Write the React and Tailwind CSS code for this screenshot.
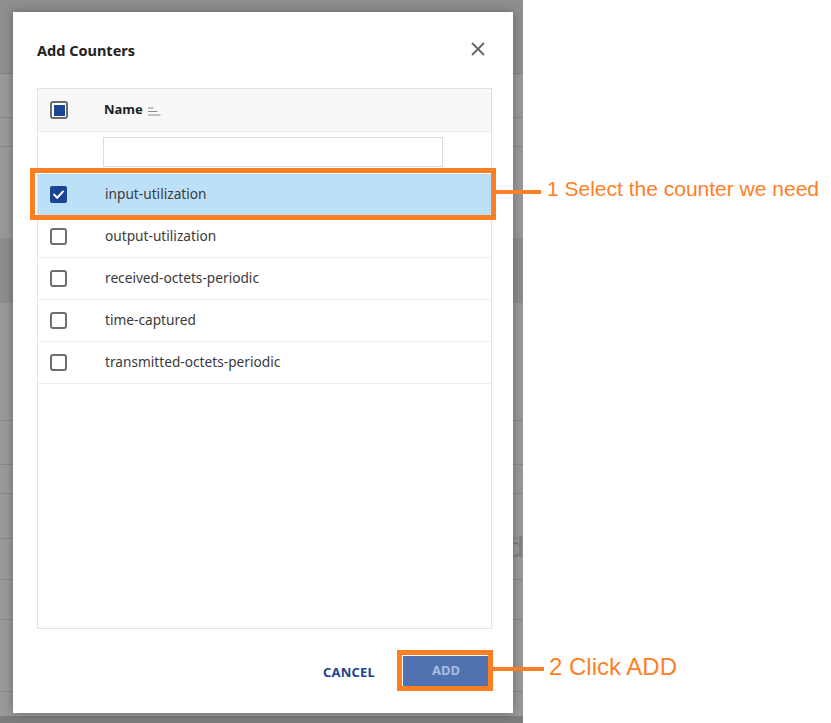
import React from "react";

function Box({ checked }) {
  if (checked) {
    return (
      <div className="w-[17px] h-[17px] rounded-[2px] bg-[#1a4494] flex items-center justify-center">
        <svg width="13" height="13" viewBox="0 0 13 13" fill="none">
          <path d="M2.2 6.8 L5.2 9.7 L10.9 3.6" stroke="#fff" strokeWidth="2" strokeLinecap="square" />
        </svg>
      </div>
    );
  }
  return <div className="w-[17px] h-[17px] rounded-[3px] border-2 border-[#6e6e6e] bg-white" />;
}

export default function App() {
  const rows = [
    "input-utilization",
    "output-utilization",
    "received-octets-periodic",
    "time-captured",
    "transmitted-octets-periodic",
  ];
  return (
    <div className="relative w-[831px] h-[723px] bg-white overflow-hidden font-['Noto_Sans',sans-serif]">
      {/* dimmed page behind */}
      <div className="relative w-[523px] h-[723px] bg-[#999999] flex flex-col overflow-hidden">
        <div className="h-[74px] shrink-0 bg-[#8f8f8f] border-b border-[#828282]" />
        <div className="h-[44px] shrink-0 border-b border-[#888888]" />
        <div className="h-[29px] shrink-0 border-b border-[#888888]" />
        <div className="h-[91px] shrink-0" />
        <div className="h-[65px] shrink-0 bg-[#8d8d8d]" />
        <div className="h-[118px] shrink-0 border-b border-[#888888]" />
        <div className="h-[44px] shrink-0 border-b border-[#888888]" />
        <div className="h-[29px] shrink-0 border-b border-[#888888]" />
        <div className="h-[45px] shrink-0 border-b border-[#888888]" />
        <div className="h-[41px] shrink-0 border-b border-[#888888]" />
        <div className="h-[40px] shrink-0 border-b border-[#888888]" />
        <div className="h-[72px] shrink-0 border-b border-[#888888]" />
        <div className="flex-1" />
        <div className="h-[7px] shrink-0 bg-[#7c7c7c]" />
        <span className="absolute left-[507px] top-[528px] text-[28px] leading-[36px] text-[#7f7f7f]">d</span>
      </div>

      {/* dialog */}
      <div className="absolute left-[13px] top-[12px] w-[500px] h-[701px] bg-white shadow-[0_0_10px_rgba(0,0,0,0.3)] flex flex-col">
        <div className="h-[76px] shrink-0 flex items-center justify-between pl-6 pr-[28px]">
          <span className="text-[14.5px] font-bold text-[#222] leading-[20px]">Add Counters</span>
          <svg width="14" height="14" viewBox="0 0 14 14" className="-mt-[3px]">
            <path d="M1 1 L13 13 M13 1 L1 13" stroke="#666" strokeWidth="1.8" />
          </svg>
        </div>

        <div className="ml-6 mr-[21px] h-[541px] shrink-0 border border-[#e3e3e3] flex flex-col">
          <div className="h-[43px] shrink-0 bg-[#f8f8f8] border-b border-[#ebebeb] flex items-center">
            <div className="w-[66px] pl-[12px] shrink-0">
              <div className="w-[18px] h-[18px] rounded-[3px] border-2 border-[#6b6b6b] p-[1.5px] bg-white">
                <div className="w-full h-full bg-[#1a4494]" />
              </div>
            </div>
            <span className="text-[13px] font-bold text-[#222]">Name</span>
            <svg width="13" height="9" viewBox="0 0 13 9" className="ml-[5px] mt-[2px]">
              <path d="M0 1 H5.5 M0 4.5 H9.5 M0 8 H12.5" stroke="#8a8a8a" strokeWidth="1" />
            </svg>
          </div>
          <div className="h-[42px] shrink-0 flex items-start pt-[5px] pl-[65px]">
            <div className="w-[340px] h-[30px] border border-[#dcdcdc] bg-white" />
          </div>
          {rows.map((r, i) => (
            <div
              key={r}
              className={
                i === 0
                  ? "h-[42px] shrink-0 flex items-center bg-[#bde0f9] border-b border-[#bde0f9]"
                  : "h-[42px] shrink-0 flex items-center border-b border-[#ededed]"
              }
            >
              <div className="w-[67px] pl-[12px] shrink-0">
                <Box checked={i === 0} />
              </div>
              <span className="text-[13.7px] text-[#3a3a3a]">{r}</span>
            </div>
          ))}
        </div>

        <div className="flex-1 flex items-center justify-end pr-6">
          <button className="text-[13px] font-bold text-[#1b4491] mr-[28px] mt-[3px] tracking-[0.2px]">CANCEL</button>
          <button className="w-[86px] h-[31px] bg-[#5072b1] text-[#a9bde0] text-[13px] font-bold">ADD</button>
        </div>
      </div>

      {/* annotations */}
      <div className="absolute left-[30px] top-[168px] w-[466px] h-[52px] border-[5px] border-[#fd7f24]" />
      <div className="absolute left-[496px] top-[190px] w-[45px] h-[4px] bg-[#fd7f24]" />
      <span className="absolute left-[547px] top-[177px] text-[21px] leading-[24px] text-[#ff7f27] font-['Liberation_Sans',Arial,sans-serif] whitespace-nowrap">
        1 Select the counter we need
      </span>

      <div className="absolute left-[397px] top-[650px] w-[96px] h-[41px] border-[5px] border-[#fd7f24]" />
      <div className="absolute left-[493px] top-[667px] w-[51px] h-[4px] bg-[#fd7f24]" />
      <span className="absolute left-[549px] top-[653px] text-[24px] leading-[27px] text-[#ff7f27] font-['Liberation_Sans',Arial,sans-serif] whitespace-nowrap">
        2 Click ADD
      </span>
    </div>
  );
}
